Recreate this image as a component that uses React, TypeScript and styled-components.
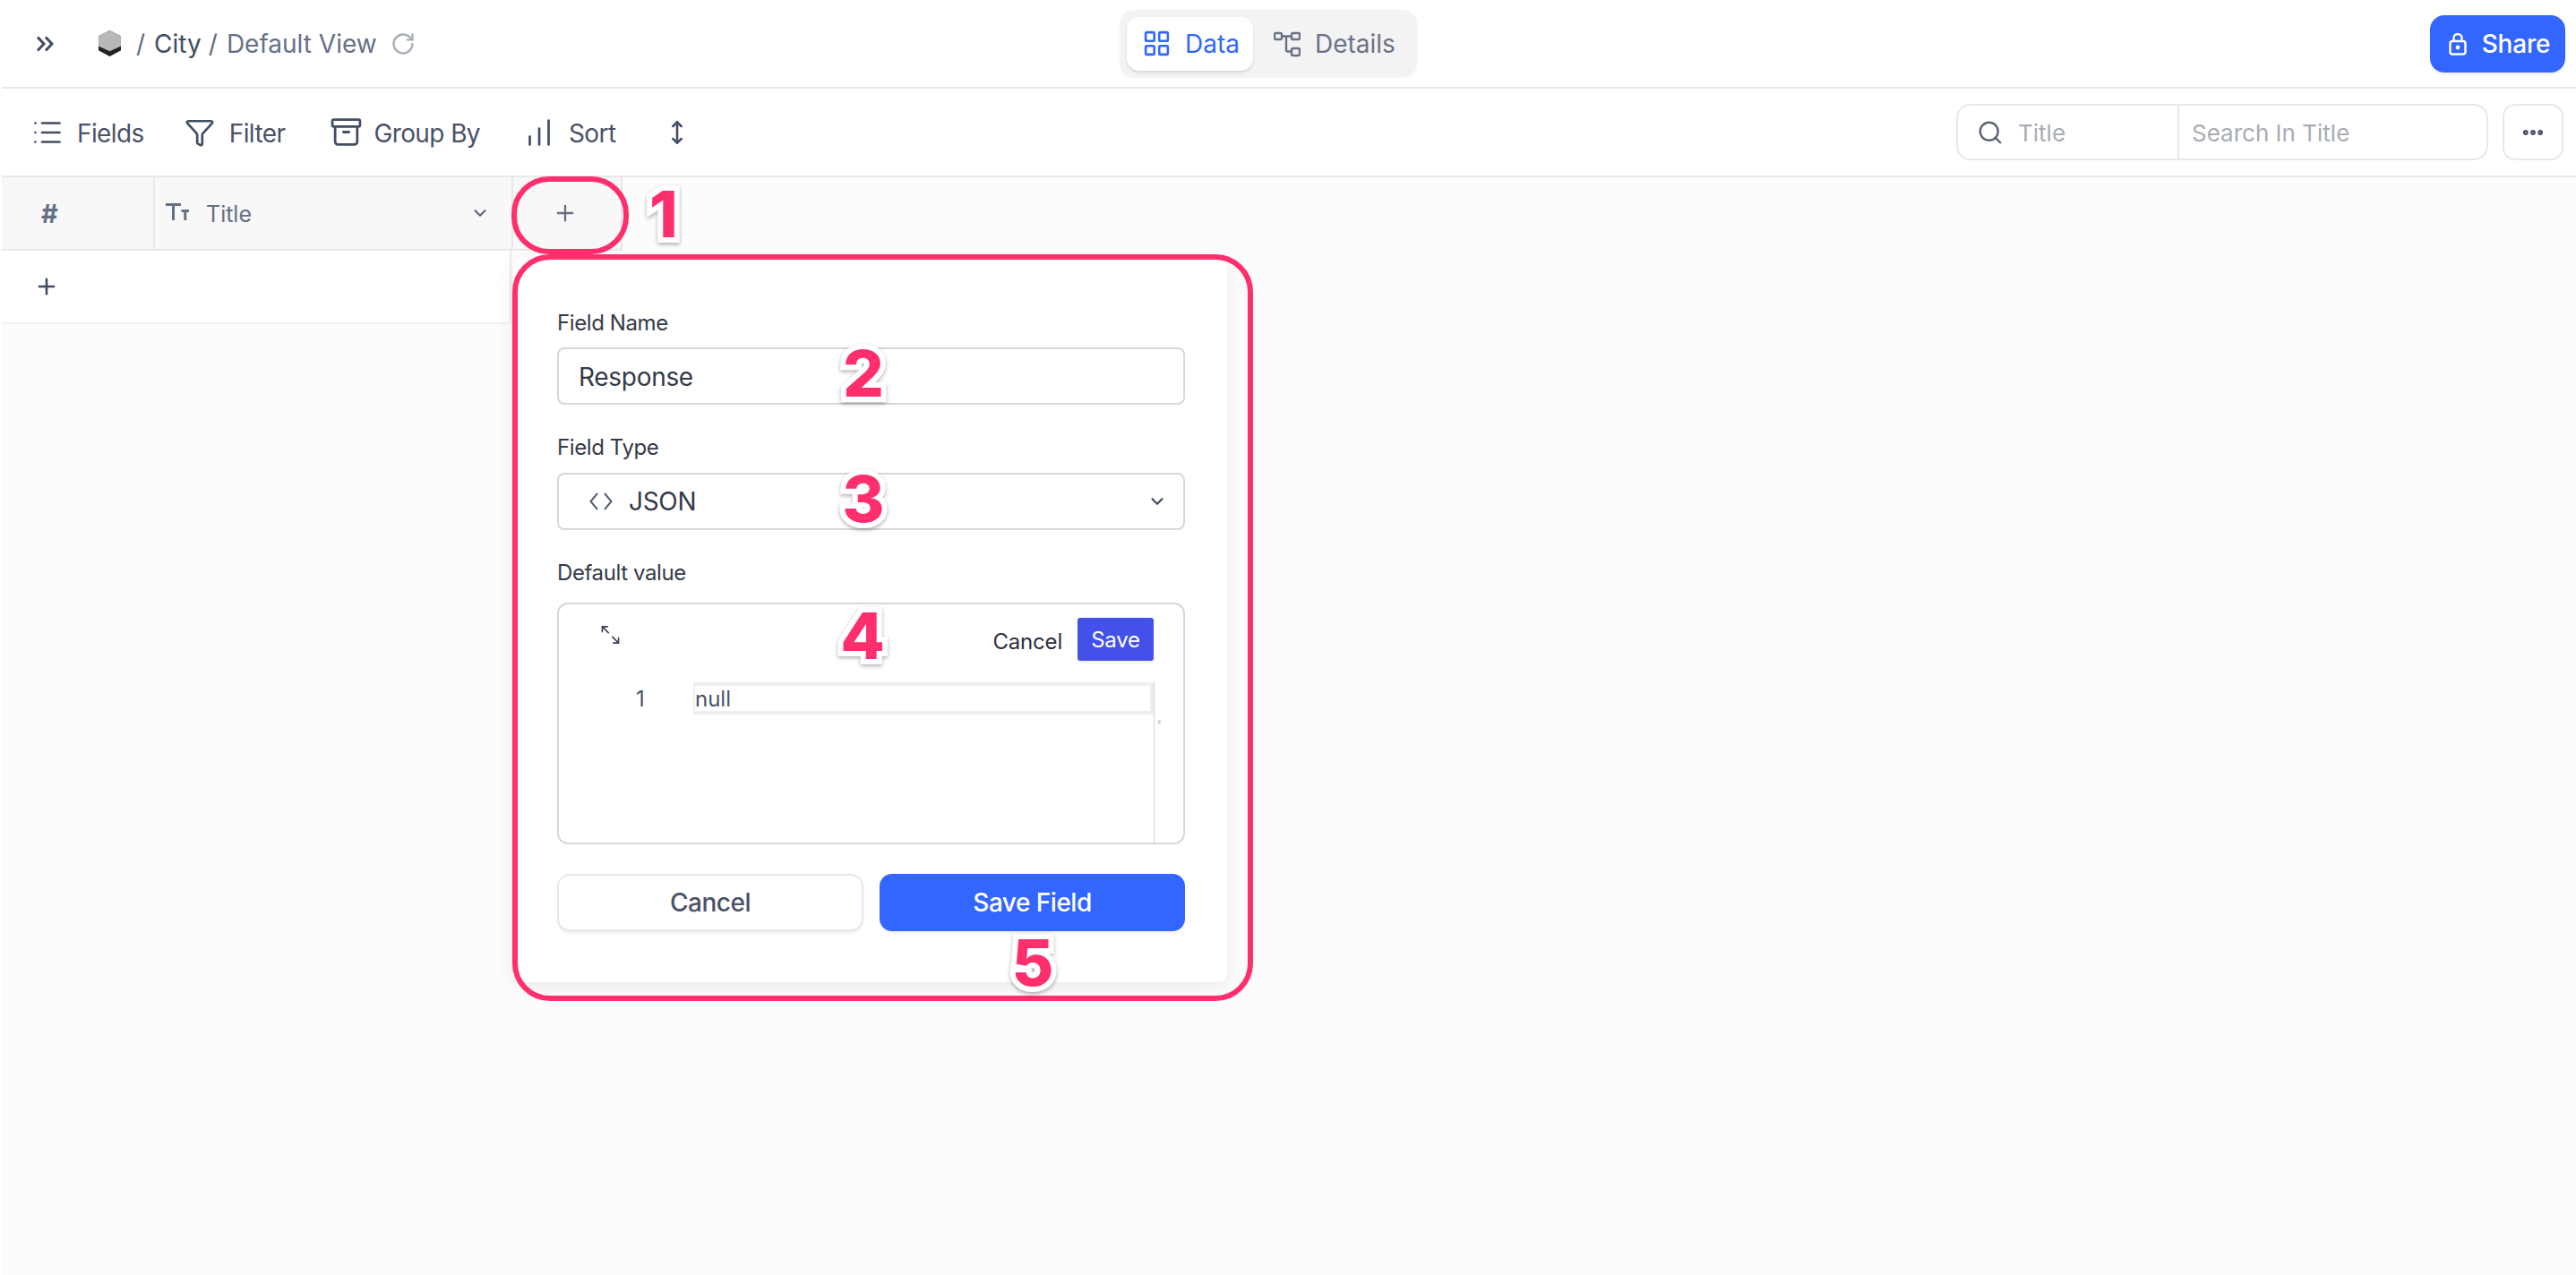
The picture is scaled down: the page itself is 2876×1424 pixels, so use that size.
import React from 'react'
import styled, { createGlobalStyle } from 'styled-components'
import {
  Archive,
  ChartNoAxesColumnIncreasing,
  ChevronDown,
  Ellipsis,
  Funnel,
  LayoutGrid,
  List,
  MoveVertical,
  Plus,
  RotateCw,
  Search,
} from 'lucide-react'

const GlobalStyle = createGlobalStyle`
  html, body {
    margin: 0;
    padding: 0;
    background: #ffffff;
  }

  body {
    font-family: Inter, "Noto Sans", sans-serif;
    color: #4a5268;
  }
`

const Page = styled.div`
  position: relative;
  width: 2876px;
  height: 1424px;
  padding-left: 2px;
  box-sizing: border-box;
  background: #fff;
  overflow: hidden;
`

const Canvas = styled.div`
  display: flex;
  flex-direction: column;
  height: 100%;
  background: #fcfcfc;
`

const TopBar = styled.header`
  display: flex;
  align-items: center;
  flex: none;
  height: 99px;
  box-sizing: border-box;
  border-bottom: 2px solid #e8e8e8;
  background: #fff;
`

const Crumbs = styled.div`
  display: flex;
  align-items: center;
  flex: none;
  width: 1248px;
  padding-left: 38px;
  box-sizing: border-box;
  font-size: 28px;
`

const Collapse = styled.svg`
  width: 20px;
  height: 18px;
  color: #3f4a60;
`

const Logo = styled.svg`
  width: 27px;
  height: 29px;
  margin: 0 16px 0 49px;
`

const Slash = styled.span`
  color: #5f6b80;
  margin-right: 10px;
`

const Project = styled.span`
  color: #414b61;
  margin-right: 8px;
`

const ViewName = styled.span`
  color: #667085;
`

const Reload = styled(RotateCw)`
  width: 28px;
  height: 28px;
  margin-left: 15px;
  color: #a9adb7;
`

const Tabs = styled.div`
  display: flex;
  align-items: center;
  flex: none;
  width: 332px;
  height: 76px;
  padding: 0 8px;
  box-sizing: border-box;
  background: #f3f3f3;
  border-radius: 16px;
`

const Tab = styled.div<{ $active?: boolean }>`
  display: flex;
  align-items: center;
  gap: ${({ $active }) => ($active ? '15px' : '16px')};
  height: 60px;
  width: ${({ $active }) => ($active ? '141px' : 'auto')};
  padding: 0 0 0 ${({ $active }) => ($active ? '17px' : '23px')};
  box-sizing: border-box;
  border-radius: 14px;
  font-size: 28px;
  color: ${({ $active }) => ($active ? '#3366ff' : '#6b7285')};
  background: ${({ $active }) => ($active ? '#fff' : 'transparent')};
  box-shadow: ${({ $active }) => ($active ? '0 2px 3px rgba(0, 0, 0, 0.12)' : 'none')};
`

const TabGrid = styled(LayoutGrid)`
  width: 33px;
  height: 33px;
`

const TabTree = styled.svg`
  width: 30px;
  height: 30px;
`

const ShareButton = styled.button`
  display: flex;
  align-items: center;
  justify-content: center;
  gap: 17px;
  width: 151px;
  height: 64px;
  margin-left: auto;
  margin-right: 12px;
  padding: 0 0 0 4px;
  border: 0;
  border-radius: 16px;
  background: #3366ff;
  color: #fff;
  font: 500 28px Inter, sans-serif;
  letter-spacing: -0.2px;
  box-shadow: 0 3px 2px rgba(0, 0, 0, 0.05);
`

const ShareLock = styled.svg`
  width: 20px;
  height: 26px;
`

const ToolBar = styled.div`
  display: flex;
  align-items: center;
  flex: none;
  height: 99px;
  padding-left: 33px;
  padding-right: 14px;
  box-sizing: border-box;
  border-bottom: 2px solid #e8e8e8;
  background: #fff;
`

const ToolItem = styled.div<{ $gap: number; $after: number }>`
  display: flex;
  align-items: center;
  gap: ${({ $gap }) => $gap}px;
  margin-right: ${({ $after }) => $after}px;
  font-size: 28px;
  letter-spacing: -0.6px;
  color: #4a5268;
`

const ToolLabel = styled.span`
  margin-top: 3px;
`

const ToolIcon = styled.span<{ $size: number }>`
  display: flex;
  color: #434d63;

  svg {
    width: ${({ $size }) => $size}px;
    height: ${({ $size }) => $size}px;
    display: block;
  }
`

const SearchBox = styled.div`
  display: flex;
  align-items: stretch;
  width: 594px;
  height: 63px;
  margin-left: auto;
  box-sizing: border-box;
  background: #fff;
  border: 2px solid #e8e8e8;
  border-radius: 16px;
  font-size: 26px;
  color: #a8acb6;
`

const SearchField = styled.div`
  display: flex;
  align-items: center;
  gap: 16px;
  width: 247px;
  padding-left: 21px;
  box-sizing: border-box;
  border-right: 2px solid #e8e8e8;

  svg {
    width: 30px;
    height: 30px;
    color: #5f6675;
  }
`

const SearchColumn = styled.span`
  margin-top: 2px;
`

const SearchText = styled.div`
  display: flex;
  align-items: center;
  padding: 2px 0 0 14px;
`

const MoreButton = styled.div`
  display: flex;
  align-items: center;
  justify-content: center;
  width: 68px;
  height: 63px;
  margin-left: 16px;
  box-sizing: border-box;
  border: 2px solid #e8e8e8;
  border-radius: 14px;
  background: #fff;
  color: #4a5268;

  svg {
    width: 28px;
    height: 28px;
    stroke-width: 3;
  }
`

const HeaderRow = styled.div`
  display: flex;
  flex: none;
  height: 82px;
`

const HeadCell = styled.div<{ $width: number }>`
  display: flex;
  align-items: center;
  flex: none;
  width: ${({ $width }) => $width}px;
  box-sizing: border-box;
  background: #f8f8f8;
  border-right: 2px solid #e8e8e8;
  border-bottom: 2px solid #e8e8e8;
`

const Hash = styled.span`
  margin-left: 44px;
  font-size: 29px;
  font-weight: 700;
  color: #667085;
`

const TypeIcon = styled.svg`
  width: 26px;
  height: 19px;
  margin-left: 12px;
  margin-top: -4px;
  color: #667085;
`

const HeadTitle = styled.span`
  margin: 1px 0 0 19px;
  font-size: 25px;
  color: #667085;
`

const HeadChevron = styled(ChevronDown)`
  width: 22px;
  height: 22px;
  margin-left: auto;
  margin-right: 24px;
  color: #556075;
`

const AddColumn = styled(Plus)`
  width: 28px;
  height: 28px;
  margin-left: 44px;
  color: #667085;
`

const AddRow = styled.div`
  display: flex;
  align-items: center;
  flex: none;
  width: 569px;
  height: 82px;
  padding-left: 36px;
  box-sizing: border-box;
  background: #fff;
  border-bottom: 2px solid #f2f2f2;
  border-right: 2px solid #ececec;
  color: #3f4a60;

  svg {
    width: 28px;
    height: 28px;
  }
`

const Popover = styled.div`
  position: absolute;
  left: 573px;
  top: 288px;
  width: 797px;
  height: 809px;
  padding: 59px 47px 0 49px;
  box-sizing: border-box;
  background: #fff;
  border-radius: 10px;
  box-shadow: 0 6px 22px rgba(0, 0, 0, 0.07);
`

const FieldLabel = styled.div<{ $gap: number }>`
  height: 28px;
  margin-bottom: ${({ $gap }) => $gap}px;
  font-size: 24px;
  line-height: 28px;
  letter-spacing: -0.4px;
  color: #333a47;
`

const FieldBox = styled.div`
  display: flex;
  align-items: center;
  height: 64px;
  margin-bottom: 34px;
  box-sizing: border-box;
  border: 2px solid #d8d8d8;
  border-radius: 8px;
  font-size: 28px;
  color: #333a47;
  letter-spacing: -0.3px;
`

const NameBox = styled(FieldBox)`
  padding: 2px 0 0 22px;
`

const TypeBox = styled(FieldBox)`
  padding: 0 18px 0 34px;
`

const CodeIcon = styled.svg`
  width: 26px;
  height: 20px;
  margin-right: 18px;
  color: #556075;
`

const TypeChevron = styled(ChevronDown)`
  width: 22px;
  height: 22px;
  margin-left: auto;
  color: #3f4a60;
`

const Editor = styled.div`
  position: relative;
  height: 270px;
  margin-bottom: 33px;
  box-sizing: border-box;
  border: 2px solid #d8d8d8;
  border-radius: 12px;
`

const EditorBar = styled.div`
  display: flex;
  align-items: flex-start;
  padding: 15px 33px 0 47px;
  height: 87px;
  box-sizing: border-box;
`

const ExpandIcon = styled.svg`
  width: 21px;
  height: 20px;
  margin-top: 9px;
  color: #3a4254;
`

const EditorCancel = styled.span`
  margin-left: auto;
  margin-top: 12px;
  font-size: 24px;
  letter-spacing: -0.2px;
  color: #2b3040;
`

const EditorSave = styled.span`
  display: flex;
  align-items: center;
  justify-content: center;
  width: 85px;
  height: 48px;
  margin-left: 17px;
  background: #4351e8;
  border-radius: 3px;
  color: #fff;
  font-size: 24px;
  letter-spacing: -0.2px;
  box-shadow: 0 3px 2px rgba(0, 0, 0, 0.05);
`

const CodeLine = styled.div`
  display: flex;
  align-items: center;
  height: 36px;
`

const LineNumber = styled.span`
  width: 150px;
  padding-left: 86px;
  box-sizing: border-box;
  font-size: 24px;
  color: #4a5268;
`

const LineBody = styled.span`
  width: 514px;
  height: 36px;
  box-sizing: border-box;
  border: 4px solid #eeeeee;
  border-left-width: 2px;
  font-size: 24px;
  line-height: 29px;
  color: #4a5268;
`

const Gutter = styled.div`
  position: absolute;
  left: 664px;
  top: 87px;
  bottom: 0;
  width: 1px;
  background: #d4d4d4;
`

const GutterMark = styled.span`
  position: absolute;
  left: 668px;
  top: 126px;
  font-size: 8px;
  line-height: 10px;
  color: #b8b8b8;
`

const Actions = styled.div`
  display: grid;
  grid-template-columns: 342px 341px;
  gap: 18px;
`

const ActionButton = styled.button<{ $primary?: boolean }>`
  height: 64px;
  box-sizing: border-box;
  border: ${({ $primary }) => ($primary ? '0' : '2px solid #e8e8e8')};
  border-radius: 14px;
  background: ${({ $primary }) => ($primary ? '#3366ff' : '#fff')};
  color: ${({ $primary }) => ($primary ? '#fff' : '#4a5268')};
  font: 500 28px Inter, sans-serif;
  letter-spacing: -0.5px;
  box-shadow: 0 3px 3px rgba(0, 0, 0, 0.05);
`

const Callout = styled.div<{ $x: number; $y: number; $w: number; $h: number }>`
  position: absolute;
  left: ${({ $x }) => $x}px;
  top: ${({ $y }) => $y}px;
  width: ${({ $w }) => $w}px;
  height: ${({ $h }) => $h}px;
  box-sizing: border-box;
  border: 6px solid #ff2e6c;
  border-radius: 42px;
`

const Marker = styled.div<{ $x: number; $y: number }>`
  position: absolute;
  left: ${({ $x }) => $x}px;
  top: ${({ $y }) => $y}px;
  transform: translate(-50%, -50%);
  font-size: 72px;
  line-height: 1;
  font-weight: 800;
  color: #ff2e6c;
  -webkit-text-stroke: 12px #fff;
  paint-order: stroke fill;
  filter: drop-shadow(0 2px 2px rgba(0, 0, 0, 0.3));
`

const markers = [
  { n: 1, x: 741, y: 239 },
  { n: 2, x: 964, y: 417 },
  { n: 3, x: 964, y: 557 },
  { n: 4, x: 963, y: 710 },
  { n: 5, x: 1153, y: 1075 },
]

const App = () => (
  <>
    <GlobalStyle />
    <Page>
      <Canvas>
        <TopBar>
          <Crumbs>
            <Collapse viewBox="0 0 20 18" fill="none" stroke="currentColor" strokeWidth="3">
              <path d="M2 1.500l7 7.500-7 7.500M11 1.500l7 7.500-7 7.500" />
            </Collapse>
            <Logo viewBox="0 0 28 30">
              <path d="M14 0l13 6.500v16.500L14 30 1 23V6.500z" fill="#222" />
              <path d="M14 0l13 6.500v11.500L14 24 1 18V6.500z" fill="#b8b8bb" />
            </Logo>
            <Slash>/</Slash>
            <Project>City</Project>
            <Slash>/</Slash>
            <ViewName>Default View</ViewName>
            <Reload strokeWidth={2} />
          </Crumbs>
          <Tabs>
            <Tab $active>
              <TabGrid strokeWidth={1.9} />
              Data
            </Tab>
            <Tab>
              <TabTree viewBox="0 0 30 30" fill="none" stroke="currentColor" strokeWidth="2.400">
                <rect x="1" y="3" width="8" height="7" rx="1.500" />
                <rect x="20" y="3" width="9" height="7" rx="1.500" />
                <rect x="20" y="20" width="9" height="8" rx="1.500" />
                <path d="M9 6.500h11M14 6.500v15a2 2 0 0 0 2 2h4" />
              </TabTree>
              Details
            </Tab>
          </Tabs>
          <ShareButton>
            <ShareLock viewBox="0 0 20 26" fill="none" stroke="currentColor" strokeWidth="2.400">
              <rect x="1.500" y="10" width="17" height="14.500" rx="2.500" />
              <path d="M5.500 10V6.500a4.500 4.500 0 0 1 9 0V10" />
              <circle cx="10" cy="17" r="1.200" fill="currentColor" />
            </ShareLock>
            Share
          </ShareButton>
        </TopBar>
        <ToolBar>
          <ToolItem $gap={15} $after={45}>
            <ToolIcon $size={36}>
              <List strokeWidth={1.8} />
            </ToolIcon>
            <ToolLabel>Fields</ToolLabel>
          </ToolItem>
          <ToolItem $gap={16} $after={50}>
            <ToolIcon $size={34}>
              <Funnel strokeWidth={1.9} />
            </ToolIcon>
            <ToolLabel>Filter</ToolLabel>
          </ToolItem>
          <ToolItem $gap={12} $after={48}>
            <ToolIcon $size={37}>
              <Archive strokeWidth={1.8} />
            </ToolIcon>
            <ToolLabel>Group By</ToolLabel>
          </ToolItem>
          <ToolItem $gap={15} $after={54}>
            <ToolIcon $size={36}>
              <ChartNoAxesColumnIncreasing strokeWidth={1.8} />
            </ToolIcon>
            <ToolLabel>Sort</ToolLabel>
          </ToolItem>
          <ToolIcon $size={28}>
            <MoveVertical strokeWidth={2.2} />
          </ToolIcon>
          <SearchBox>
            <SearchField>
              <Search strokeWidth={1.9} />
              <SearchColumn>Title</SearchColumn>
            </SearchField>
            <SearchText>Search In Title</SearchText>
          </SearchBox>
          <MoreButton>
            <Ellipsis />
          </MoreButton>
        </ToolBar>
        <HeaderRow>
          <HeadCell $width={171}>
            <Hash>#</Hash>
          </HeadCell>
          <HeadCell $width={400}>
            <TypeIcon viewBox="0 0 26 19" fill="none" stroke="currentColor" strokeWidth="3">
              <path d="M0 1.500h17M8.500 1.500V19M17.500 8.500H26M21.800 8.500V19" />
            </TypeIcon>
            <HeadTitle>Title</HeadTitle>
            <HeadChevron strokeWidth={2.2} />
          </HeadCell>
          <HeadCell $width={122}>
            <AddColumn strokeWidth={2} />
          </HeadCell>
        </HeaderRow>
        <AddRow>
          <Plus strokeWidth={2.2} />
        </AddRow>
      </Canvas>

      <Popover>
        <FieldLabel $gap={13}>Field Name</FieldLabel>
        <NameBox>Response</NameBox>
        <FieldLabel $gap={14}>Field Type</FieldLabel>
        <TypeBox>
          <CodeIcon viewBox="0 0 26 20" fill="none" stroke="currentColor" strokeWidth="2">
            <path d="M9 1L1.500 10 9 19M17 1l7.500 9L17 19" />
          </CodeIcon>
          JSON
          <TypeChevron strokeWidth={2.4} />
        </TypeBox>
        <FieldLabel $gap={19}>Default value</FieldLabel>
        <Editor>
          <EditorBar>
            <ExpandIcon viewBox="1 1 22 22" fill="none" stroke="currentColor" strokeWidth="1.800">
              <path d="M2 9V2h7M2 2l8 8M22 15v7h-7M22 22l-8-8" />
            </ExpandIcon>
            <EditorCancel>Cancel</EditorCancel>
            <EditorSave>Save</EditorSave>
          </EditorBar>
          <CodeLine>
            <LineNumber>1</LineNumber>
            <LineBody>null</LineBody>
          </CodeLine>
          <Gutter />
          <GutterMark>x</GutterMark>
        </Editor>
        <Actions>
          <ActionButton>Cancel</ActionButton>
          <ActionButton $primary>Save Field</ActionButton>
        </Actions>
      </Popover>

      <Callout $x={571} $y={197} $w={131} $h={87} />
      <Callout $x={572} $y={284} $w={827} $h={834} />
      {markers.map((m) => (
        <Marker key={m.n} $x={m.x} $y={m.y}>
          {m.n}
        </Marker>
      ))}
    </Page>
  </>
)

export default App
